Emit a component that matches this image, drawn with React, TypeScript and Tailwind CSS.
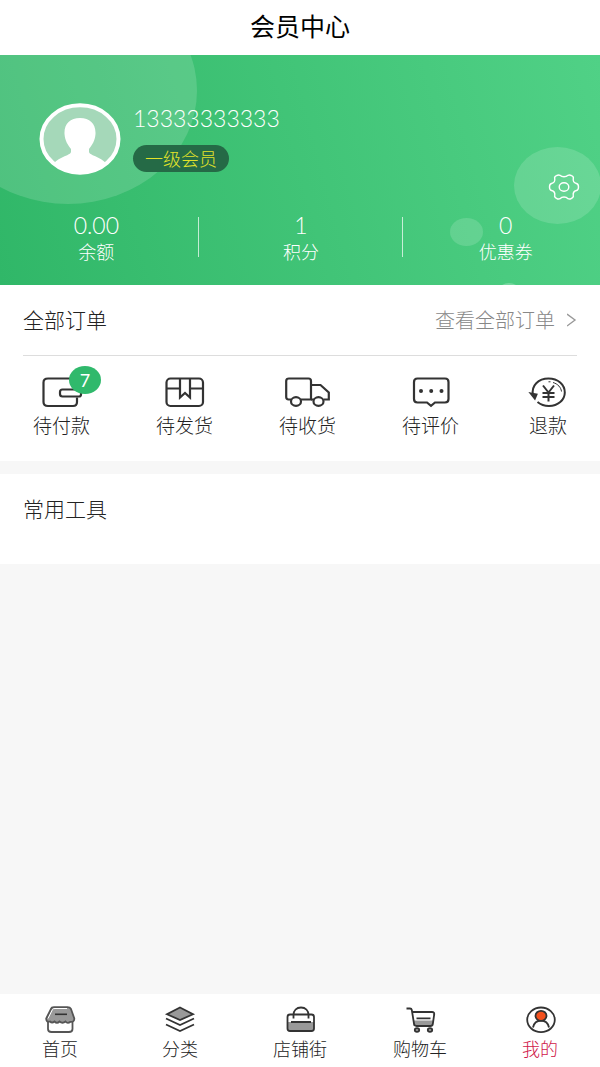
import React from "react"

const __TAILWIND_CSS = {
    cjk: "font-['Noto_Sans_CJK_SC',sans-serif]",
    digits: "font-['Lato',sans-serif]",
    orderIcon: 'h-[33px] w-[46px] fill-none stroke-[#333] stroke-[2.2]',
    tabIcon: 'h-[28px] w-[34px] fill-none stroke-[#333] stroke-[1.8]',
}

const WalletIcon = () => (
    <svg viewBox="0 0 46 33" className={__TAILWIND_CSS.orderIcon}>
        <path d="M38 13V6.500Q38 2.500 34 2.500H9Q4.500 2.500 4.500 6.500V26Q4.500 30 9 30H34Q38 30 38 26V21.500" />
        <path d="M40 13.500H23.500Q21 13.500 21 16V18Q21 20.500 23.500 20.500H40Q42 20.500 42 18.500V15.500Q42 13.500 40 13.500Z" />
    </svg>
)

const BoxIcon = () => (
    <svg viewBox="0 0 46 33" className={__TAILWIND_CSS.orderIcon}>
        <rect x="4.500" y="2.500" width="36.500" height="27.500" rx="4" />
        <path d="M4.500 12.500H18M28 12.500H41M18 2.500V21.500L23 17L28 21.500V2.500" />
    </svg>
)

const TruckIcon = () => (
    <svg viewBox="0 0 46 33" className={__TAILWIND_CSS.orderIcon}>
        <path d="M6 23.500H3.500Q1.200 23.500 1.200 21V5Q1.200 2.500 4 2.500H23.500Q26 2.500 26 5V23.500H15.500" />
        <path d="M26 9H35.500L43.800 16.500V23.500H38.500M29 23.500H26" />
        <ellipse cx="11" cy="25.500" rx="5" ry="4.300" />
        <ellipse cx="33.500" cy="25.500" rx="5" ry="4.300" />
    </svg>
)

const CommentIcon = () => (
    <svg viewBox="0 0 46 33" className={__TAILWIND_CSS.orderIcon}>
        <path d="M9.500 2.500H37Q40.500 2.500 40.500 6V23Q40.500 26.500 37 26.500H27L23 29.800L19 26.500H9.500Q6 26.500 6 23V6Q6 2.500 9.500 2.500Z" />
        <g className="fill-[#333] stroke-none">
            <circle cx="13" cy="15" r="2" />
            <circle cx="23.200" cy="15" r="2" />
            <circle cx="33.500" cy="15" r="2" />
        </g>
    </svg>
)

const RefundIcon = () => (
    <svg viewBox="0 0 46 33" className="h-[33px] w-[46px] fill-none stroke-[#333] stroke-2">
        <path d="M8 19C6 9.500 13.500 2.500 23.500 2.500C33 2.500 39.800 8.500 39.800 16.500C39.800 24 33 30 24 30C19 30 15.500 28.500 12.500 26" />
        <path className="fill-[#333]" d="M5.800 17.500L11.500 18.500L9.800 22.500Z" />
        <path className="stroke-1" d="M23.500 5.800H25.500M28 6.500C33 8 36 11.500 36.500 15.500" />
        <path d="M18 9.500L23.500 16.500L29 9.500M17.500 17H29.500M17.500 21H29.500M23.500 16V25.500" />
    </svg>
)

const HomeIcon = () => (
    <svg viewBox="0 0 34 28" className={__TAILWIND_CSS.tabIcon}>
        <path className="stroke-[#555]" d="M5 15V23Q5 26 8.500 26H26Q29.500 26 29.500 23V15" />
        <path className="fill-[#999] stroke-[#555]" d="M8 3Q8.500 1.200 11 1.200H24.500Q27 1.200 28 3L31.300 12.500Q31.500 16 27.500 15.800Q24.500 18 22.500 15.500Q19.500 18 16.500 15.500Q14 18 11.500 15.500Q9 17.500 7 15.500Q3 16.500 3.200 12.500Z" />
        <path className="stroke-white stroke-1" d="M5 12.500L9.500 3.500Q10 2.500 12 2.500H24" />
        <path className="stroke-[1.6]" d="M12 8.300H24" />
    </svg>
)

const CategoryIcon = () => (
    <svg viewBox="0 0 34 28" className={__TAILWIND_CSS.tabIcon}>
        <path className="fill-[#999]" d="M17 1.500L30 8.200L17 14L4 8.200Z" />
        <path d="M3 12.500L17 19L31 12.500M3 18.500L17 25L31 18.500" />
    </svg>
)

const StreetIcon = () => (
    <svg viewBox="0 0 34 28" className={__TAILWIND_CSS.tabIcon}>
        <path className="fill-[#999] stroke-none" d="M5 16H31V25H5Z" />
        <rect x="4.500" y="8.500" width="26.500" height="16.500" rx="2.500" />
        <path d="M8 16H28M10.500 12.500V9C10.500 4.500 13.500 1.500 18 1.500C22.500 1.500 25.500 4.500 25.500 9V12.500" />
    </svg>
)

const CartIcon = () => (
    <svg viewBox="0 0 34 28" className={__TAILWIND_CSS.tabIcon}>
        <path className="fill-[#999] stroke-none" d="M10 14.500H30L29 20H10.500Z" />
        <path d="M3.500 2.500H7Q8.500 2.500 8.800 4L11 17.500Q11.200 20 13.500 20H27.500Q29.500 20 29.800 18L31.200 8.500Q31.500 6 29 6H9.500M13.500 12.300H27.500" />
        <ellipse className="fill-[#999]" cx="14" cy="24" rx="2.200" ry="1.800" />
        <ellipse className="fill-[#999]" cx="27" cy="24" rx="2.200" ry="1.800" />
    </svg>
)

const MineIcon = () => (
    <svg viewBox="0 0 34 28" className={__TAILWIND_CSS.tabIcon}>
        <ellipse cx="18" cy="13.800" rx="13.800" ry="12.300" />
        <path d="M10 21.500C11 17 14 14.500 18 14.500C22 14.500 25 17 26 21.500" />
        <ellipse className="fill-[#f4511e]" cx="18" cy="9.800" rx="5.500" ry="5" />
    </svg>
)

const GearIcon = () => (
    <svg viewBox="0 0 32 28" className="h-[28px] w-[32px] fill-none stroke-white stroke-[1.4]">
        <path d="M8.500 2.700Q10.500 1.400 12 2.300Q13.500 3.800 16 3.800Q18.500 3.800 20 2.300Q21.500 1.400 23.500 2.700Q25.800 3.700 25.300 5.500Q24.500 9.500 28.500 10.500Q30.500 11 30.500 14Q30.500 17 28.500 17.500Q24.500 18.500 25.300 22.500Q25.800 24.300 23.500 25.300Q21.500 26.600 20 25.700Q18.500 24 16 24Q13.500 24 12 25.700Q10.500 26.600 8.500 25.300Q6.200 24.300 6.700 22.500Q7.500 18.500 3.500 17.500Q1.500 17 1.500 14Q1.500 11 3.500 10.500Q7.500 9.500 6.700 5.500Q6.200 3.700 8.500 2.700Z" />
        <ellipse cx="16" cy="14" rx="4.800" ry="4.200" />
    </svg>
)

const Avatar = () => (
    <svg viewBox="0 0 82 72" className="h-[72px] w-[82px]">
        <defs>
            <clipPath id="face">
                <ellipse cx="41" cy="36" rx="38" ry="33.500" />
            </clipPath>
        </defs>
        <ellipse cx="41" cy="36" rx="38.500" ry="34" fill="#a5d8b9" />
        <g clipPath="url(#face)" fill="#fff">
            <path d="M41 15C51 15 57 21 56.500 31C56 38 53 42 50 46V49C51 53 64 54 68 62V72H14V62C18 54 31 53 32 49V46C29 42 26 38 25.500 31C25 21 31 15 41 15Z" />
        </g>
        <ellipse cx="41" cy="36" rx="38.500" ry="33.700" fill="none" stroke="#fff" strokeWidth="4" />
    </svg>
)

const stats = [
    { value: '0.00', label: '余额' },
    { value: '1', label: '积分' },
    { value: '0', label: '优惠券' },
]

const orders = [
    { label: '待付款', icon: <WalletIcon />, count: 7 },
    { label: '待发货', icon: <BoxIcon /> },
    { label: '待收货', icon: <TruckIcon /> },
    { label: '待评价', icon: <CommentIcon /> },
    { label: '退款', icon: <RefundIcon /> },
]

const tabs = [
    { label: '首页', icon: <HomeIcon /> },
    { label: '分类', icon: <CategoryIcon /> },
    { label: '店铺街', icon: <StreetIcon /> },
    { label: '购物车', icon: <CartIcon /> },
    { label: '我的', icon: <MineIcon />, active: true },
]

const MemberCard = () => {
    return (
        <section className="relative overflow-hidden bg-linear-75 from-[#30b768] to-[#50d186] pt-12 pb-[22px] text-white">
            {/* background bubbles */}
            <div className="absolute -top-[78px] -left-[61px] h-[227px] w-[258px] rounded-[50%] bg-white/15"></div>
            <div className="absolute top-[92px] -right-[1px] h-[77px] w-[87px] rounded-[50%] bg-white/15"></div>
            <div className="absolute top-[163px] right-[117px] h-[28px] w-[33px] rounded-[50%] bg-white/15"></div>
            <div className="absolute top-[228px] right-[80px] h-[18px] w-[22px] rounded-[50%] bg-white/25"></div>

            <div className="relative flex items-start gap-3 pl-[39px]">
                <Avatar />
                <div>
                    <div className={`text-[23px] leading-[30px] font-light ${__TAILWIND_CSS.digits}`}>13333333333</div>
                    <span className="mt-3 flex h-[27px] w-fit items-center rounded-full bg-[#256a46] px-3 pb-0.5 text-lg leading-none font-light text-[#e3e32a]">一级会员</span>
                </div>
            </div>
            <button type="button" aria-label="设置" className="absolute top-[118px] right-5">
                <GearIcon />
            </button>

            <div className="relative mt-9 -mr-2 -ml-1.5 grid grid-cols-3 text-center">
                {stats.map((item, i) => (
                    <div key={item.label} className="flex items-center">
                        <div className="flex-1">
                            <div className={`text-[23px] leading-7 font-light ${__TAILWIND_CSS.digits}`}>{item.value}</div>
                            <div className="text-lg leading-6 font-light">{item.label}</div>
                        </div>
                        {i < stats.length - 1 && <div className="-ml-px h-10 w-px bg-white/70"></div>}
                    </div>
                ))}
            </div>
        </section>
    )
}

const OrderPanel = () => {
    return (
        <section className="bg-white pb-5">
            <div className="mx-[23px] flex h-[71px] items-center justify-between border-b border-[#ddd]">
                <h2 className="text-[21px] font-light">全部订单</h2>
                <a href="#orders" className="flex items-center gap-3 text-xl font-light text-[#888]">
                    查看全部订单
                    <svg viewBox="0 0 10 14" className="h-3.5 w-2.5 fill-none stroke-[#999] stroke-[1.4]">
                        <path d="M0 1L8 7L0 13" />
                    </svg>
                </a>
            </div>
            <div className="flex justify-between pt-5 pr-[29px] pl-[33px]">
                {orders.map((item) => (
                    <a key={item.label} href="#order" className="relative flex flex-col items-center">
                        {item.icon}
                        <span className="text-[19px] leading-8 font-light whitespace-nowrap">{item.label}</span>
                        {item.count && (
                            <span className={`absolute -top-[10px] -right-[11px] flex h-7 w-8 items-center justify-center rounded-[50%] bg-[#30b96c] text-lg text-white ${__TAILWIND_CSS.digits}`}>{item.count}</span>
                        )}
                    </a>
                ))}
            </div>
        </section>
    )
}

const TabBar = () => {
    return (
        <nav className="grid grid-cols-5 bg-white pt-3 pb-[5px]">
            {tabs.map((tab) => (
                <a key={tab.label} href="#tab" className={`flex flex-col items-center ${tab.active ? 'text-[#d0184a]' : ''}`}>
                    {tab.icon}
                    <span className="text-lg leading-7 font-light">{tab.label}</span>
                </a>
            ))}
        </nav>
    )
}

export const App = () => {
    return (
        <div className={`flex min-h-screen flex-col bg-[#f7f7f7] text-[#222] ${__TAILWIND_CSS.cjk}`}>
            <header className="flex h-[55px] items-center justify-center bg-white pb-1">
                <h1 className="text-[25px] leading-none text-black">会员中心</h1>
            </header>
            <main className="flex-1">
                <MemberCard />
                <OrderPanel />
                <section className="mt-[13px] h-[90px] bg-white px-[23px] pt-[18px]">
                    <h2 className="text-[21px] leading-8 font-light">常用工具</h2>
                </section>
            </main>
            <TabBar />
        </div>
    )
}

export default App;
